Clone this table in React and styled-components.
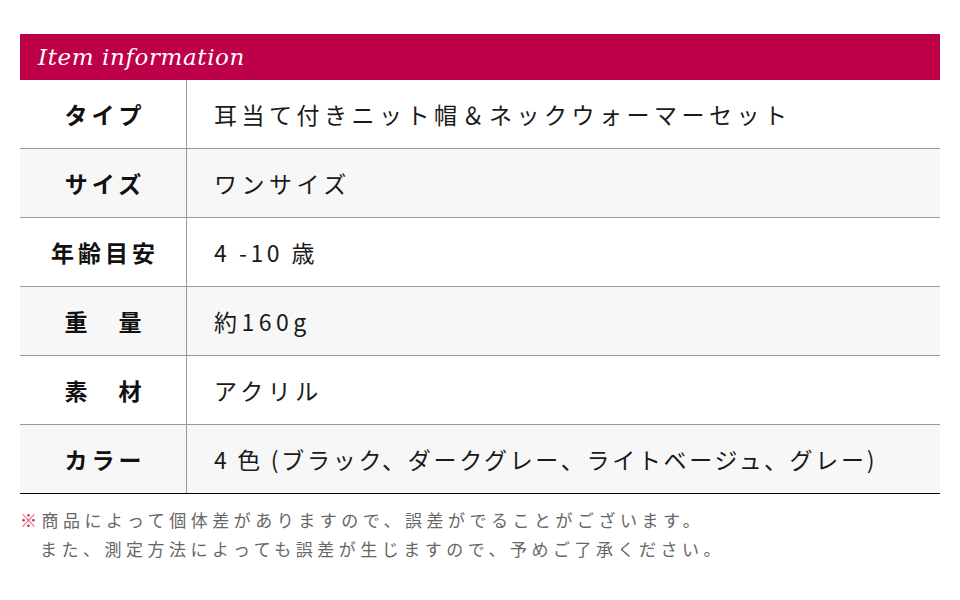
import React from "react";
import styled, { createGlobalStyle } from "styled-components";

const Global = createGlobalStyle`
  body { margin: 0; background: #fff; font-family: "Noto Sans CJK JP", "Noto Sans", sans-serif; }
`;

const Page = styled.div`
  width: 960px;
  height: 600px;
  padding: 34px 20px 0;
  box-sizing: border-box;
`;

const Header = styled.div`
  height: 46px;
  background: #be0048;
  display: flex;
  align-items: center;
  padding-left: 18px;
  color: #fff;
  font-family: "DejaVu Serif", "Liberation Serif", serif;
  font-style: italic;
  font-size: 23px;
  letter-spacing: 0.6px;
`;

const Table = styled.div`
  display: grid;
  grid-template-columns: 167px 1fr;
  border-bottom: 1px solid #000;
`;

const Row = styled.div`
  display: contents;
`;

const Cell = styled.div`
  height: 68px;
  display: flex;
  align-items: center;
  background: ${(p) => (p.$alt ? "#f7f7f7" : "#fff")};
  border-top: ${(p) => (p.$first ? "none" : "1px solid #9a9a9a")};
  color: #111;
  font-size: 23px;
  letter-spacing: 4px;
`;

const Label = styled(Cell)`
  justify-content: center;
  font-weight: 700;
  border-right: 1px solid #9a9a9a;
  padding-left: 4px;
`;

const Value = styled(Cell)`
  padding-left: 27px;
  color: #1a1a1a;
  letter-spacing: ${(p) => p.$spacing ?? 4.5}px;
`;

const Notes = styled.div`
  padding-top: 11px;
  font-size: 17px;
  letter-spacing: 4.5px;
  color: #666;
  line-height: 29px;
`;

const Mark = styled.span`
  color: #d0224e;
`;

const Indent = styled.div`
  padding-left: 20px;
`;

const rows = [
  ["タイプ", "耳当て付きニット帽＆ネックウォーマーセット"],
  ["サイズ", "ワンサイズ"],
  ["年齢目安", "4 -10 歳", 3.5],
  ["重　量", "約160g"],
  ["素　材", "アクリル"],
  ["カラー", "4 色 (ブラック、ダークグレー、ライトベージュ、グレー)", 2.7],
];

export default function App() {
  return (
    <Page>
      <Global />
      <Header>Item information</Header>
      <Table>
        {rows.map(([k, v, s], i) => (
          <Row key={k}>
            <Label $alt={i % 2 === 1} $first={i === 0}>{k}</Label>
            <Value $alt={i % 2 === 1} $first={i === 0} $spacing={s}>{v}</Value>
          </Row>
        ))}
      </Table>
      <Notes>
        <div><Mark>※</Mark>商品によって個体差がありますので、誤差がでることがございます。</div>
        <Indent>また、測定方法によっても誤差が生じますので、予めご了承ください。</Indent>
      </Notes>
    </Page>
  );
}
